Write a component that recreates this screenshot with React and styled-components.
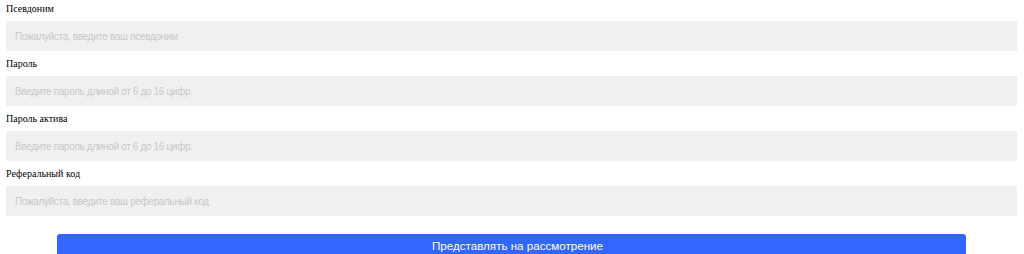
import React from 'react'
import styled, { createGlobalStyle } from 'styled-components'

const GlobalStyle = createGlobalStyle`
body {
  margin: 0;
  background: #fff;
}
`

const Form = styled.form`
padding: 0 7px 0 6px;
`

const Field = styled.div`
margin-bottom: 4px;
`

const Label = styled.label`
display: block;
padding-top: 2px;
margin-bottom: 5px;
font-family: "Liberation Serif", serif;
font-size: 10px;
line-height: 14px;
color: #000;
`

const Input = styled.input`
display: block;
box-sizing: border-box;
width: 100%;
height: 30px;
padding: 0 9px;
border: none;
outline: none;
background: #f0f0f0;
font-family: "Liberation Sans", Arial, sans-serif;
font-size: 10px;
letter-spacing: -0.35px;
color: #333;

&::placeholder {
  color: #c9c9c9;
}
`

const Button = styled.button`
display: block;
width: 909px;
height: 23px;
margin: 18px auto 0;
padding: 0 0 0 12px;
border: none;
border-radius: 3px;
background: #3366ff;
color: #fff;
font-family: "Liberation Sans", Arial, sans-serif;
font-size: 11.6px;
cursor: pointer;
`

const fields = [
  { label: 'Псевдоним', placeholder: 'Пожалуйста, введите ваш псевдоним', type: 'text' },
  { label: 'Пароль', placeholder: 'Введите пароль длиной от 6 до 16 цифр.', type: 'password' },
  { label: 'Пароль актива', placeholder: 'Введите пароль длиной от 6 до 16 цифр.', type: 'password' },
  { label: 'Реферальный код', placeholder: 'Пожалуйста, введите ваш реферальный код', type: 'text' },
]

const App = () => {
  return (
    <>
      <GlobalStyle />
      <Form onSubmit={e => e.preventDefault()}>
        {fields.map(f => (
          <Field key={f.label}>
            <Label>{f.label}</Label>
            <Input type={f.type} placeholder={f.placeholder} />
          </Field>
        ))}
        <Button type="submit">Представлять на рассмотрение</Button>
      </Form>
    </>
  )
}

export default App
